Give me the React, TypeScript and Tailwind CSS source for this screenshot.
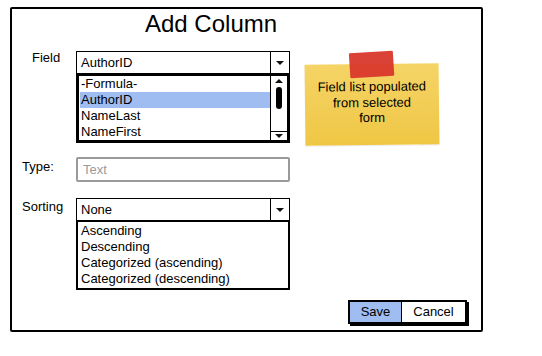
import React from 'react';

const font = { fontFamily: '"Liberation Sans", Arial, sans-serif' };

const Arrow = ({ up = false }: { up?: boolean }) => (
    <svg width="10" height="6" viewBox="0 0 10 6" className="block">
        <polygon points={up ? '1,5 9,5 5,1' : '1,1 9,1 5,5'} fill="#111" />
    </svg>
);

const Dropdown = ({ value }: { value: string }) => (
    <div className="flex h-[22px] w-[214px] border-[1.5px] border-black border-b-0 bg-white">
        <div className="flex-1 pl-[4px] text-[13px] leading-[21px] text-black">{value}</div>
        <div className="flex w-[19px] items-center justify-center border-l border-black">
            <Arrow />
        </div>
    </div>
);

const App: React.FC = () => (
    <div className="h-[356px] w-[542px] bg-white pt-[7px] pl-[10px]" style={font}>
        <div className="flex h-[325px] w-[473px] flex-col rounded-[2px] border-2 border-black">
            {/* Title */}
            <h1 className="pt-[1px] pl-[133px] text-[24px] leading-[28px] text-black">Add Column</h1>

            <div className="mt-[13px] flex">
                {/* Form */}
                <div className="w-[278px]">
                    {/* Field */}
                    <div className="flex">
                        <div className="w-[64px] pl-[20px] text-[13px] leading-[14px] text-black">Field</div>
                        <div>
                            <Dropdown value="AuthorID" />
                            <div className="flex h-[70px] w-[214px] border-[3px] border-black bg-white">
                                <div className="flex-1 pl-[1px] text-[13px] leading-[16px] text-black">
                                    <div className="pl-[1px]">-Formula-</div>
                                    <div className="bg-[#9fbdf0] pl-[1px]">AuthorID</div>
                                    <div className="pl-[1px]">NameLast</div>
                                    <div className="pl-[1px]">NameFirst</div>
                                </div>
                                <div className="flex w-[17px] flex-col items-center border-l border-black">
                                    <div className="pt-[2px]"><Arrow up /></div>
                                    <div className="mt-[3px] h-[22px] w-[6px] rounded-[3px] bg-black" />
                                    <div className="mt-auto flex h-[9px] w-full items-center justify-center border-t border-black">
                                        <Arrow />
                                    </div>
                                </div>
                            </div>
                        </div>
                    </div>

                    {/* Type */}
                    <div className="mt-[14px] flex">
                        <div className="w-[64px] pl-[10px] pt-[2px] text-[13px] leading-[16px] text-black">Type:</div>
                        <div className="h-[25px] w-[214px] rounded-[2px] border-2 border-[#9a9a9a] pl-[5px] text-[13px] leading-[21px] text-[#9a9a9a]">
                            Text
                        </div>
                    </div>

                    {/* Sorting */}
                    <div className="mt-[16px] flex">
                        <div className="w-[64px] pl-[10px] pt-[1px] text-[13px] leading-[16px] text-black">Sorting</div>
                        <div>
                            <Dropdown value="None" />
                            <div className="h-[70px] w-[214px] border-[2.5px] border-black bg-white pt-[1px] pl-[3px] text-[13px] leading-[16px] text-black">
                                <div>Ascending</div>
                                <div>Descending</div>
                                <div>Categorized (ascending)</div>
                                <div>Categorized (descending)</div>
                            </div>
                        </div>
                    </div>
                </div>

                {/* Sticky note */}
                <div className="relative mt-[13px] ml-[15px] h-[81px] w-[134px] rotate-[-0.6deg] bg-gradient-to-b from-[#f5d466] to-[#efc744] pt-[15px] text-center text-[13px] leading-[15.5px] text-black shadow-[0_1px_1px_rgba(0,0,0,0.08)]">
                    <div className="absolute top-[-12px] left-[45px] h-[25px] w-[44px] rotate-[-3deg] rounded-[1px] bg-[#d9382c] opacity-95" />
                    <div>Field list populated</div>
                    <div>from selected</div>
                    <div>form</div>
                </div>
            </div>

            {/* Buttons */}
            <div className="mt-auto flex justify-end pr-[14px] pb-[6px]">
                <div className="flex h-[24px] border-2 border-black text-[13px] leading-[20px] text-black shadow-[2px_2px_0_#000]">
                    <div className="w-[52px] border-r border-black bg-[#9fbdf0] text-center">Save</div>
                    <div className="w-[63px] bg-white text-center">Cancel</div>
                </div>
            </div>
        </div>
    </div>
);

export default App;
